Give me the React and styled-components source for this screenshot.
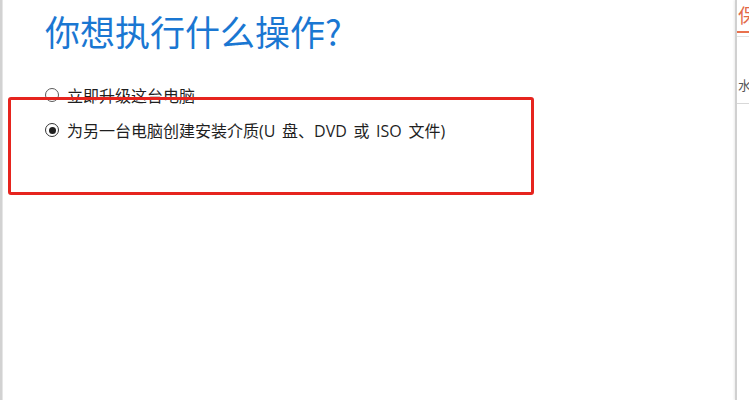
import React from "react";
import styled, { createGlobalStyle } from "styled-components";

const GlobalStyle = createGlobalStyle`
  html, body {
    margin: 0;
    padding: 0;
    background: #ffffff;
    overflow: hidden;
  }
  body {
    font-family: "Open Sans", "Noto Sans CJK SC", sans-serif;
  }
`;

const Screen = styled.div`
  display: flex;
  width: 749px;
  height: 400px;
  position: relative;
  background: #ffffff;
`;

const BackEdge = styled.div`
  width: 2px;
  background: #d2d2d2;
  border-right: 1px solid #e6e6e6;
`;

const Dialog = styled.main`
  flex: 1;
  padding: 8px 0 0 42px;
  box-sizing: border-box;
`;

const Title = styled.h1`
  margin: 0;
  font-family: "Noto Sans CJK SC", sans-serif;
  font-size: 35px;
  line-height: 46px;
  font-weight: 400;
  color: #1a77d2;
`;

const Options = styled.div`
  display: flex;
  flex-direction: column;
  gap: 13px;
  margin-top: 30px;
`;

const Option = styled.label`
  display: flex;
  align-items: center;
  gap: 8px;
  height: 22px;
  font-size: 16px;
  word-spacing: 2.5px;
  color: #1f1f1f;
  white-space: pre;
`;

const Radio = styled.span`
  width: 14px;
  height: 14px;
  box-sizing: border-box;
  border-radius: 50%;
  border: 1px solid ${(p) => (p.checked ? "#333333" : "#5a5a5a")};
  display: flex;
  align-items: center;
  justify-content: center;
  flex-shrink: 0;
  &::after {
    content: "";
    width: 7px;
    height: 7px;
    border-radius: 50%;
    background: #1f1f1f;
    display: ${(p) => (p.checked ? "block" : "none")};
  }
`;

const Highlight = styled.div`
  position: absolute;
  left: 8px;
  top: 97px;
  width: 526px;
  height: 98px;
  box-sizing: border-box;
  border: 3px solid #e6241e;
  border-radius: 3px;
  pointer-events: none;
`;

const SidePanel = styled.aside`
  width: 12px;
  border-left: 2px solid #d0d0d0;
  box-shadow: -1px 0 2px rgba(0, 0, 0, 0.08);
  overflow: hidden;
  display: flex;
  flex-direction: column;
`;

const Tab = styled.div`
  height: 31px;
  border-bottom: 2px solid #e9714d;
  font-family: "Noto Sans CJK SC", sans-serif;
  font-size: 19px;
  line-height: 30px;
  color: #e36a48;
  white-space: nowrap;
  padding-left: 1px;
`;

const TabRule = styled.div`
  height: 3px;
  border-bottom: 1px solid #e2e2e2;
`;

const SideItem = styled.div`
  margin-top: 38px;
  height: 28px;
  border-bottom: 1px solid #d8d8d8;
  font-family: "Noto Sans CJK SC", sans-serif;
  font-size: 13px;
  line-height: 20px;
  color: #555555;
  white-space: nowrap;
  padding-left: 1px;
`;

export default function App() {
  return (
    <>
      <GlobalStyle />
      <Screen>
        <BackEdge />
        <Dialog>
          <Title>你想执行什么操作?</Title>
          <Options>
            <Option>
              <Radio />
              立即升级这台电脑
            </Option>
            <Option>
              <Radio checked />
              为另一台电脑创建安装介质(U 盘、DVD 或 ISO 文件)
            </Option>
          </Options>
        </Dialog>
        <SidePanel>
          <Tab>保</Tab>
          <TabRule />
          <SideItem>水</SideItem>
        </SidePanel>
        <Highlight />
      </Screen>
    </>
  );
}
